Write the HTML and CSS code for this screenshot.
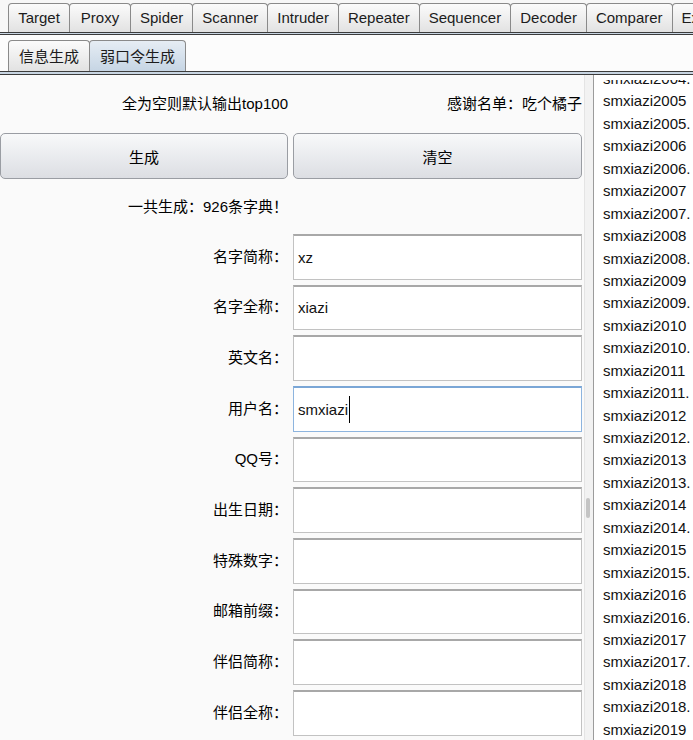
FILE: index.html
```html
<!DOCTYPE html>
<html>
<head>
<meta charset="utf-8">
<link rel="stylesheet" href="styles.css">
</head>
<body>
<div class="tabs">
  <div class="tab">Target</div>
  <div class="tab">Proxy</div>
  <div class="tab">Spider</div>
  <div class="tab">Scanner</div>
  <div class="tab">Intruder</div>
  <div class="tab">Repeater</div>
  <div class="tab">Sequencer</div>
  <div class="tab">Decoder</div>
  <div class="tab">Comparer</div>
  <div class="tab">Extender</div>
</div>
<div class="rule"></div>
<div class="subtabs">
  <div class="subtab">信息生成</div>
  <div class="subtab active">弱口令生成</div>
</div>
<div class="rule2"></div>
<div class="main">
  <div class="panel">
    <div class="row info">
      <div class="cell-right">全为空则默认输出top100</div>
      <div class="cell-right">感谢名单：吃个橘子</div>
    </div>
    <div class="row buttons">
      <div class="btn">生成</div>
      <div class="btn">清空</div>
    </div>
    <div class="row count">
      <div class="cell-right">一共生成：926条字典！</div>
    </div>
    <div class="row form">
      <div class="label">名字简称：</div><div class="field">xz</div>
      <div class="label">名字全称：</div><div class="field">xiazi</div>
      <div class="label">英文名：</div><div class="field"></div>
      <div class="label">用户名：</div><div class="field focused">smxiazi<span class="caret"></span></div>
      <div class="label">QQ号：</div><div class="field"></div>
      <div class="label">出生日期：</div><div class="field"></div>
      <div class="label">特殊数字：</div><div class="field"></div>
      <div class="label">邮箱前缀：</div><div class="field"></div>
      <div class="label">伴侣简称：</div><div class="field"></div>
      <div class="label">伴侣全称：</div><div class="field"></div>
    </div>
  </div>
  <div class="divider"><div class="thumb"></div></div>
  <div class="list">
    <div class="viewport">
      <div class="items">
        <div>smxiazi2004.</div>
        <div>smxiazi2005</div>
        <div>smxiazi2005.</div>
        <div>smxiazi2006</div>
        <div>smxiazi2006.</div>
        <div>smxiazi2007</div>
        <div>smxiazi2007.</div>
        <div>smxiazi2008</div>
        <div>smxiazi2008.</div>
        <div>smxiazi2009</div>
        <div>smxiazi2009.</div>
        <div>smxiazi2010</div>
        <div>smxiazi2010.</div>
        <div>smxiazi2011</div>
        <div>smxiazi2011.</div>
        <div>smxiazi2012</div>
        <div>smxiazi2012.</div>
        <div>smxiazi2013</div>
        <div>smxiazi2013.</div>
        <div>smxiazi2014</div>
        <div>smxiazi2014.</div>
        <div>smxiazi2015</div>
        <div>smxiazi2015.</div>
        <div>smxiazi2016</div>
        <div>smxiazi2016.</div>
        <div>smxiazi2017</div>
        <div>smxiazi2017.</div>
        <div>smxiazi2018</div>
        <div>smxiazi2018.</div>
        <div>smxiazi2019</div>
        <div>smxiazi2019.</div>
        <div>smxiazi2020</div>
      </div>
    </div>
  </div>
</div>
</body>
</html>
```
FILE: styles.css
```css
html, body {
  margin: 0;
  padding: 0;
}
body {
  width: 693px;
  height: 740px;
  overflow: hidden;
  background: #fafafa;
  font-family: "Liberation Sans", "Noto Sans CJK SC", sans-serif;
  color: #000;
}
.tabs {
  display: flex;
  height: 32px;
  box-sizing: border-box;
  padding: 3px 0 0 8px;
  background: #f7f7f7;
  overflow: hidden;
  white-space: nowrap;
}
.tab {
  flex: none;
  min-width: 42px;
  text-align: center;
  padding: 0 9px;
  border: 1px solid #8a8a8a;
  border-bottom: none;
  border-radius: 4px 4px 0 0;
  margin-right: -1px;
  background: linear-gradient(#fbfbfb, #e2e2e2);
  font-size: 15px;
  line-height: 28px;
  color: #1c1c1c;
}
.rule {
  height: 3px;
  box-sizing: border-box;
  border-top: 1px solid #3c3c3c;
  border-bottom: 1px solid #3c3c3c;
  background: #c8d5e2;
}
.subtabs {
  display: flex;
  height: 36px;
  box-sizing: border-box;
  padding: 5px 0 0 8px;
  background: #fcfcfc;
}
.subtab {
  flex: none;
  padding: 0 10px;
  border: 1px solid #8a8a8a;
  border-bottom: none;
  border-radius: 4px 4px 0 0;
  margin-right: -1px;
  background: linear-gradient(#fbfbfb, #e2e2e2);
  font-family: "Noto Sans CJK SC", sans-serif;
  font-size: 15px;
  line-height: 30px;
  color: #1c1c1c;
}
.subtab.active {
  background: linear-gradient(#e6edf4, #c6d5e4);
}
.rule2 {
  height: 4px;
  box-sizing: border-box;
  border-top: 1px solid #3c3c3c;
  border-bottom: 1px solid #3c3c3c;
  background: #c8d5e2;
}
.main {
  display: flex;
  height: 665px;
}
.panel {
  flex: none;
  width: 584px;
  box-sizing: border-box;
  padding-top: 19px;
  background: #fafafa;
  font-size: 15px;
}
.row {
  display: grid;
  grid-template-columns: 288px 289px;
  column-gap: 5px;
}
.info, .count {
  line-height: 20px;
}
.cell-right {
  text-align: right;
  white-space: nowrap;
}
.buttons {
  margin-top: 19px;
}
.btn {
  height: 46px;
  box-sizing: border-box;
  border: 1px solid #9a9da3;
  border-radius: 5px;
  background: linear-gradient(#f8f9fa, #dcdee3);
  display: flex;
  align-items: center;
  justify-content: center;
  font-family: "Noto Sans CJK SC", sans-serif;
  font-size: 15px;
}
.count {
  margin-top: 18px;
}
.form {
  margin-top: 17px;
  row-gap: 5px;
  align-items: center;
}
.label {
  text-align: right;
  white-space: nowrap;
  line-height: 20px;
}
.field {
  height: 45.67px;
  box-sizing: border-box;
  border: 1px solid #c2c2c2;
  border-top: 2px solid #a8a8a8;
  background: #fff;
  padding: 0 4px;
  display: flex;
  align-items: center;
  font-size: 15px;
  color: #111;
}
.field.focused {
  border-color: #8db4de;
  border-top-color: #7aa6d6;
}
.caret {
  display: inline-block;
  width: 0;
  height: 27px;
  border-left: 1px solid #000;
  margin-left: 1px;
}
.divider {
  flex: none;
  width: 9px;
  background: #f2f2f2;
  border-left: 1px solid #e4e4e4;
  box-sizing: border-box;
}
.thumb {
  width: 4px;
  height: 20px;
  margin: 423px 0 0 1px;
  border-radius: 2px;
  background: #c4c4c4;
}
.list {
  flex: 1;
  display: flex;
  flex-direction: column;
  background: #fff;
  border-left: 1px solid #9c9c9c;
  padding: 5px 0 0 9px;
  overflow: hidden;
}
.viewport {
  flex: 1;
  overflow: hidden;
}
.items {
  margin-top: -12px;
  font-size: 15px;
  line-height: 22.43px;
  white-space: nowrap;
  color: #111;
}
```
